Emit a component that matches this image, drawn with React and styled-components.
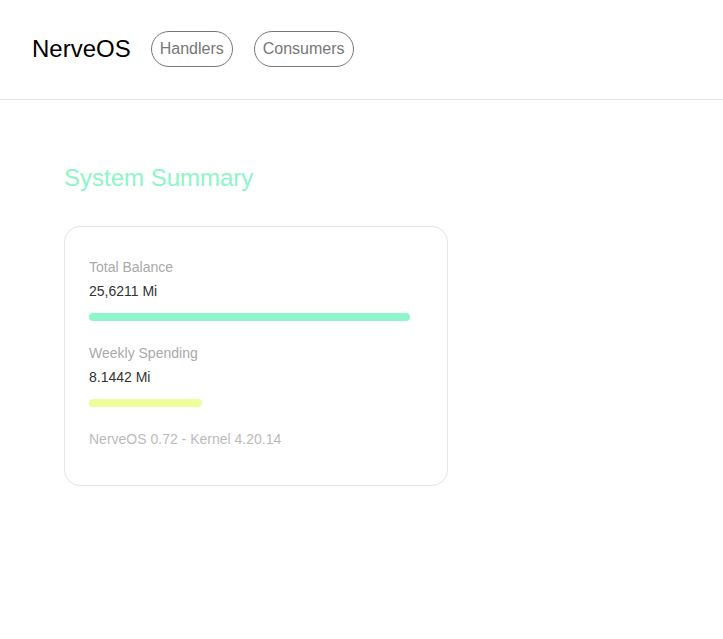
import React from 'react';
import styled, { createGlobalStyle } from 'styled-components';

const GlobalStyle = createGlobalStyle`
  body {
    margin: 0;
    background: #fff;
    font-family: "Liberation Sans", Arial, sans-serif;
  }
`;

const Header = styled.header`
  display: flex;
  align-items: center;
  gap: 21px;
  padding: 31px 32px 32px;
  border-bottom: 1px solid #e6e6e6;
`;

const Logo = styled.div`
  font-size: 24px;
  color: #000;
  margin-right: -1px;
`;

const NavButton = styled.button`
  height: 36px;
  padding: 0 8px;
  border: 1px solid #777;
  border-radius: 18px;
  background: #fff;
  color: #777;
  font-family: inherit;
  font-size: 16px;
  cursor: pointer;
`;

const Main = styled.main`
  padding: 64px;
`;

const Title = styled.h2`
  margin: 0 0 34px;
  font-size: 24px;
  font-weight: normal;
  color: #8ef5c9;
`;

const Card = styled.section`
  width: 384px;
  box-sizing: border-box;
  padding: 32px 24px 38px;
  border: 1px solid #e6e6e6;
  border-radius: 16px;
`;

const Stat = styled.div`
  margin-bottom: 24px;
`;

const Label = styled.div`
  font-size: 14px;
  color: #aaa;
  margin-bottom: 8px;
`;

const Value = styled.div`
  font-size: 14px;
  color: #333;
  margin-bottom: 14px;
`;

const Bar = styled.div`
  height: 8px;
  border-radius: 4px;
  background: ${(p) => p.$color};
`;

const Footer = styled.div`
  font-size: 14px;
  color: #bbb;
`;

const stats = [
  { label: 'Total Balance', value: '25,6211 Mi', width: 321, color: '#8ff5cc' },
  { label: 'Weekly Spending', value: '8.1442 Mi', width: 113, color: '#effd9b' },
];

export default function App() {
  return (
    <>
      <GlobalStyle />
      <Header>
        <Logo>NerveOS</Logo>
        <NavButton>Handlers</NavButton>
        <NavButton>Consumers</NavButton>
      </Header>
      <Main>
        <Title>System Summary</Title>
        <Card>
          {stats.map((s) => (
            <Stat key={s.label}>
              <Label>{s.label}</Label>
              <Value>{s.value}</Value>
              <Bar $color={s.color} style={{ width: s.width }} />
            </Stat>
          ))}
          <Footer>NerveOS 0.72 - Kernel 4.20.14</Footer>
        </Card>
      </Main>
    </>
  );
}
